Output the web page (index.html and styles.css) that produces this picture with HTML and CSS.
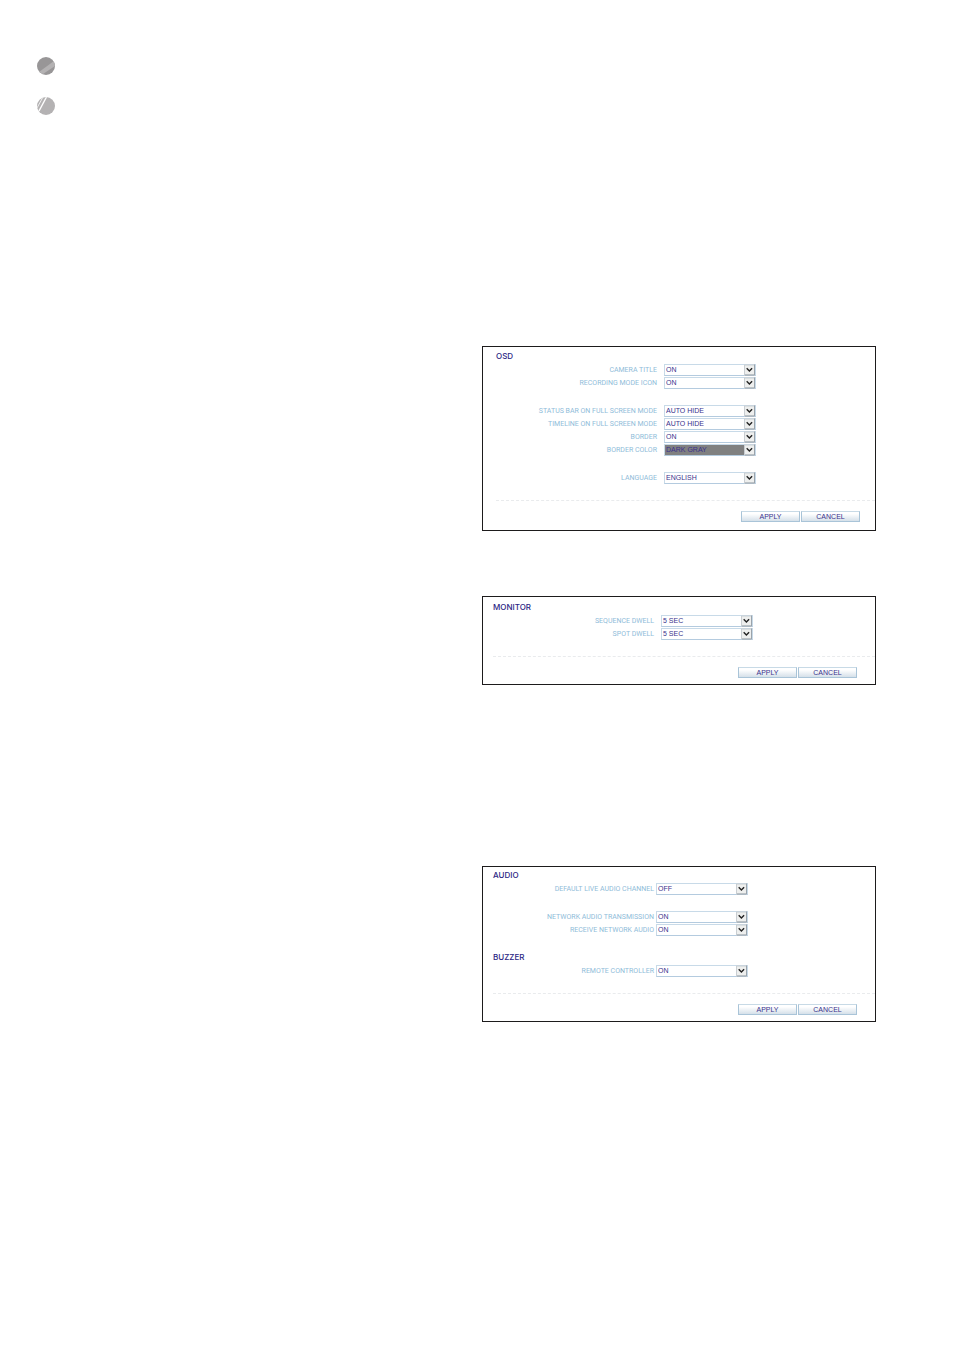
FILE: index.html
```html
<!DOCTYPE html>
<html lang="en">
<head>
    <meta charset="UTF-8">
    <meta name="viewport" content="width=device-width, initial-scale=1.0">
    <title>Display and Audio Setup</title>
    <link rel="stylesheet" href="styles.css">
</head>
<body>
    <svg class="symbols" aria-hidden="true">
        <symbol id="arrow" viewBox="0 0 11 11">
            <rect width="11" height="11" fill="#c9ced2"/>
            <rect x="1" y="1" width="9" height="9" fill="#eeefee"/>
            <path d="M10.5 0V10.5H1" fill="none" stroke="#9aa3ab"/>
            <path d="M2.7 3.8L5.4 6.5L8.1 3.8" fill="none" stroke="#222" stroke-width="1.4"/>
        </symbol>
    </svg>

    <main class="page">
        <div class="bullets">
            <svg class="bullet" viewBox="0 0 18 18" aria-hidden="true">
                <clipPath id="disc"><circle cx="9" cy="9" r="9"/></clipPath>
                <g clip-path="url(#disc)">
                    <rect width="18" height="18" fill="#989697"/>
                    <path d="M2 15L17 4L18 9L6 17Z" fill="#b4b2b3"/>
                </g>
            </svg>
            <svg class="bullet" viewBox="0 0 18 18" aria-hidden="true">
                <g clip-path="url(#disc)">
                    <rect width="18" height="18" fill="#b4b2b3"/>
                    <path d="M0 11L6 0" stroke="#fff" stroke-width="0.8"/>
                    <path d="M2 14L9.5 0" stroke="#fff" stroke-width="1.4"/>
                </g>
            </svg>
        </div>

        <div class="panels">
            <form class="panel osd">
                <h2>OSD</h2>
                <div class="group">
                    <div class="row">
                        <label for="cameraTitle">CAMERA TITLE</label>
                        <span class="field"><select id="cameraTitle"><option>ON</option><option>OFF</option></select><svg><use href="#arrow"/></svg></span>
                    </div>
                    <div class="row">
                        <label for="recordingIcon">RECORDING MODE ICON</label>
                        <span class="field"><select id="recordingIcon"><option>ON</option><option>OFF</option></select><svg><use href="#arrow"/></svg></span>
                    </div>
                </div>
                <div class="group">
                    <div class="row">
                        <label for="statusBar">STATUS BAR ON FULL SCREEN MODE</label>
                        <span class="field"><select id="statusBar"><option>AUTO HIDE</option></select><svg><use href="#arrow"/></svg></span>
                    </div>
                    <div class="row">
                        <label for="timeline">TIMELINE ON FULL SCREEN MODE</label>
                        <span class="field"><select id="timeline"><option>AUTO HIDE</option></select><svg><use href="#arrow"/></svg></span>
                    </div>
                    <div class="row">
                        <label for="border">BORDER</label>
                        <span class="field"><select id="border"><option>ON</option><option>OFF</option></select><svg><use href="#arrow"/></svg></span>
                    </div>
                    <div class="row">
                        <label for="borderColor">BORDER COLOR</label>
                        <span class="field"><select id="borderColor" class="dark-gray"><option>DARK GRAY</option></select><svg><use href="#arrow"/></svg></span>
                    </div>
                </div>
                <div class="group">
                    <div class="row">
                        <label for="language">LANGUAGE</label>
                        <span class="field"><select id="language"><option>ENGLISH</option></select><svg><use href="#arrow"/></svg></span>
                    </div>
                </div>
                <div class="actions">
                    <button type="submit">APPLY</button>
                    <button type="reset">CANCEL</button>
                </div>
            </form>

            <form class="panel monitor">
                <h2>MONITOR</h2>
                <div class="group">
                    <div class="row">
                        <label for="sequenceDwell">SEQUENCE DWELL</label>
                        <span class="field"><select id="sequenceDwell"><option>5 SEC</option></select><svg><use href="#arrow"/></svg></span>
                    </div>
                    <div class="row">
                        <label for="spotDwell">SPOT DWELL</label>
                        <span class="field"><select id="spotDwell"><option>5 SEC</option></select><svg><use href="#arrow"/></svg></span>
                    </div>
                </div>
                <div class="actions">
                    <button type="submit">APPLY</button>
                    <button type="reset">CANCEL</button>
                </div>
            </form>

            <form class="panel audio">
                <h2>AUDIO</h2>
                <div class="group">
                    <div class="row">
                        <label for="liveChannel">DEFAULT LIVE AUDIO CHANNEL</label>
                        <span class="field"><select id="liveChannel"><option>OFF</option><option>ON</option></select><svg><use href="#arrow"/></svg></span>
                    </div>
                </div>
                <div class="group">
                    <div class="row">
                        <label for="transmission">NETWORK AUDIO TRANSMISSION</label>
                        <span class="field"><select id="transmission"><option>ON</option><option>OFF</option></select><svg><use href="#arrow"/></svg></span>
                    </div>
                    <div class="row">
                        <label for="receive">RECEIVE NETWORK AUDIO</label>
                        <span class="field"><select id="receive"><option>ON</option><option>OFF</option></select><svg><use href="#arrow"/></svg></span>
                    </div>
                </div>
                <h2>BUZZER</h2>
                <div class="group">
                    <div class="row">
                        <label for="remote">REMOTE CONTROLLER</label>
                        <span class="field"><select id="remote"><option>ON</option><option>OFF</option></select><svg><use href="#arrow"/></svg></span>
                    </div>
                </div>
                <div class="actions">
                    <button type="submit">APPLY</button>
                    <button type="reset">CANCEL</button>
                </div>
            </form>
        </div>
    </main>
</body>
</html>
```
FILE: styles.css
```css
* {
    box-sizing: border-box;
}
body {
    margin: 0;
    background: #fff;
    font-family: "Liberation Sans", Arial, sans-serif;
    font-size: 7px;
}
.symbols {
    display: none;
}
.page {
    display: grid;
    grid-template-columns: 1fr 1fr;
    column-gap: 51px;
    padding: 57px 78px 57px 37px;
}
.bullets {
    display: flex;
    flex-direction: column;
    gap: 22px;
}
.bullet {
    width: 18px;
    height: 18px;
}
.panels {
    padding-top: 289px;
}
.panel {
    border: 1px solid #1d1b1c;
}
.osd {
    --label: 161px;
    --gap: 7px;
    padding: 4px 0 8px 13px;
    margin-bottom: 65px;
}
.monitor {
    --label: 161px;
    --gap: 7px;
    padding: 5px 0 6px 10px;
    margin-bottom: 181px;
}
.audio {
    --label: 161px;
    --gap: 2px;
    padding: 3px 0 6px 10px;
}
h2 {
    margin: 0 0 3px;
    font-family: Inter, "Liberation Sans", sans-serif;
    font-size: 8px;
    font-weight: 500;
    line-height: 10px;
    color: #2b2583;
}
.group {
    display: flex;
    flex-direction: column;
    gap: 1px;
    margin-bottom: 16px;
}
.row {
    display: flex;
    align-items: center;
    gap: var(--gap);
    height: 12px;
}
label {
    width: var(--label);
    text-align: right;
    font-family: Roboto, "Liberation Sans", sans-serif;
    line-height: 12px;
    color: #8fbcd9;
    white-space: nowrap;
}
.field {
    position: relative;
    display: block;
    width: 92px;
    height: 12px;
}
select {
    appearance: none;
    display: block;
    width: 100%;
    height: 12px;
    margin: 0;
    padding: 0 12px 0 1px;
    border: 1px solid #c8dae8;
    border-bottom-color: #b4cbdf;
    border-radius: 0;
    background: #fff;
    font-family: inherit;
    font-size: 7px;
    line-height: 10px;
    color: #3a328c;
}
select.dark-gray {
    background: #808080;
}
.field svg {
    position: absolute;
    top: 0;
    right: 1px;
    width: 11px;
    height: 12px;
    pointer-events: none;
}
.actions {
    display: flex;
    justify-content: flex-end;
    gap: 1px;
    padding: 10px 15px 0 0;
    border-top: 1px dashed #e9ebed;
}
.monitor .actions,
.audio .actions {
    padding-right: 18px;
}
button {
    width: 59px;
    height: 11px;
    padding: 0;
    border: 1px solid #a9c4d8;
    border-top-color: #c8dae6;
    background: linear-gradient(#fff 20%, #d5e0e9);
    font-family: inherit;
    font-size: 7px;
    line-height: 9px;
    color: #3a328c;
    cursor: pointer;
}
```
